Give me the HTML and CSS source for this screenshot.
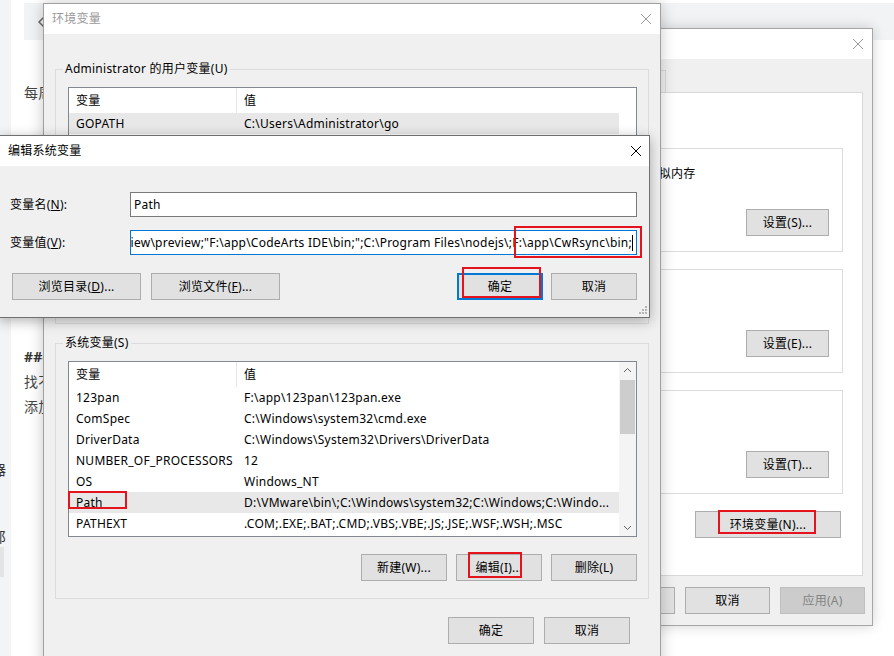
FILE: index.html
```html
<!DOCTYPE html>
<html lang="zh-CN">
<head>
  <meta charset="UTF-8" />
  <title>环境变量</title>
  <link rel="stylesheet" href="styles.css">
</head>
<body>
  <div class="page">
    <div class="side">
      <span class="side-ch c1">器</span>
      <span class="side-ch c2">郎</span>
      <span class="side-blk"></span>
    </div>
    <div class="page-main">
      <div class="topbar">
        <svg class="back" width="8" height="12" viewBox="0 0 8 12"><path d="M6 1L1 6l5 5" fill="none" stroke="#666" stroke-width="1.5"/></svg>
      </div>
      <div class="doc">
        <p class="lead">每周</p>
        <p class="h">### 配置</p>
        <p>找不到</p>
        <p>添加</p>
      </div>
    </div>
  </div>

  <!-- 系统属性 -->
  <div class="win win-sys">
    <div class="title inactive">
      <span>系统属性</span>
      <svg class="x" viewBox="0 0 10 10"><path d="M0 0L10 10M10 0L0 10" stroke="currentColor"/></svg>
    </div>
    <div class="win-body sys-body">
      <div class="tabs">
        <span class="tab">计算机名</span>
        <span class="tab">硬件</span>
        <span class="tab">高级</span>
        <span class="tab">保护</span>
        <span class="tab">远程</span>
      </div>
      <div class="panel">
        <fieldset class="group sgroup">
          <legend>性能</legend>
          <p>视觉效果，处理器计划，内存使用，以及虚拟内存</p>
          <div class="brow"><button class="btn btn-set">设置(S)...</button></div>
        </fieldset>
        <fieldset class="group sgroup">
          <legend>用户配置文件</legend>
          <p>与登录帐户相关的桌面设置</p>
          <div class="brow"><button class="btn btn-set">设置(E)...</button></div>
        </fieldset>
        <fieldset class="group sgroup">
          <legend>启动和故障恢复</legend>
          <p>系统启动、系统故障和调试信息</p>
          <div class="brow"><button class="btn btn-set">设置(T)...</button></div>
        </fieldset>
        <div class="brow env-row"><button class="btn btn-env">环境变量(N)...</button></div>
      </div>
      <div class="foot sys-foot">
        <button class="btn">确定</button>
        <button class="btn">取消</button>
        <button class="btn" disabled>应用(A)</button>
      </div>
    </div>
  </div>

  <!-- 环境变量 -->
  <div class="win win-env">
    <div class="title inactive">
      <span>环境变量</span>
      <svg class="x" viewBox="0 0 10 10"><path d="M0 0L10 10M10 0L0 10" stroke="currentColor"/></svg>
    </div>
    <div class="win-body env-body">
      <fieldset class="group g-user">
        <legend>Administrator 的用户变量(U)</legend>
        <div class="list">
          <div class="list-main">
            <div class="lrow lhead"><span>变量</span><span>值</span></div>
            <div class="lrow sel"><span>GOPATH</span><span>C:\Users\Administrator\go</span></div>
            <div class="lrow"><span>OneDrive</span><span>C:\Users\Administrator\OneDrive</span></div>
            <div class="lrow"><span>Path</span><span>C:\Users\Administrator\AppData\Local\Microsoft\WindowsApps;</span></div>
            <div class="lrow"><span>TEMP</span><span>C:\Users\Administrator\AppData\Local\Temp</span></div>
            <div class="lrow"><span>TMP</span><span>C:\Users\Administrator\AppData\Local\Temp</span></div>
          </div>
          <div class="vscroll plain"></div>
        </div>
      </fieldset>

      <fieldset class="group g-sys">
        <legend>系统变量(S)</legend>
        <div class="list">
          <div class="list-main">
            <div class="lrow lhead"><span>变量</span><span>值</span></div>
            <div class="lrow"><span>123pan</span><span>F:\app\123pan\123pan.exe</span></div>
            <div class="lrow"><span>ComSpec</span><span>C:\Windows\system32\cmd.exe</span></div>
            <div class="lrow"><span>DriverData</span><span>C:\Windows\System32\Drivers\DriverData</span></div>
            <div class="lrow"><span>NUMBER_OF_PROCESSORS</span><span>12</span></div>
            <div class="lrow"><span>OS</span><span>Windows_NT</span></div>
            <div class="lrow sel"><span>Path</span><span>D:\VMware\bin\;C:\Windows\system32;C:\Windows;C:\Windo...</span></div>
            <div class="lrow"><span>PATHEXT</span><span>.COM;.EXE;.BAT;.CMD;.VBS;.VBE;.JS;.JSE;.WSF;.WSH;.MSC</span></div>
          </div>
          <div class="vscroll">
            <svg class="arrow" width="17" height="17" viewBox="0 0 17 17"><path d="M5 10l3.5-3.5L12 10" fill="none" stroke="#606060"/></svg>
            <div class="thumb"></div>
            <div class="track"></div>
            <svg class="arrow" width="17" height="17" viewBox="0 0 17 17"><path d="M5 7l3.5 3.5L12 7" fill="none" stroke="#606060"/></svg>
          </div>
        </div>
        <div class="brow list-btns">
          <button class="btn">新建(W)...</button>
          <button class="btn">编辑(I)...</button>
          <button class="btn">删除(L)</button>
        </div>
      </fieldset>

      <div class="foot env-foot">
        <button class="btn">确定</button>
        <button class="btn">取消</button>
      </div>
    </div>
  </div>

  <!-- 编辑系统变量 -->
  <div class="win win-edit">
    <div class="title">
      <span>编辑系统变量</span>
      <svg class="x" viewBox="0 0 10 10"><path d="M0 0L10 10M10 0L0 10" stroke="currentColor"/></svg>
    </div>
    <div class="win-body edit-body">
      <div class="field">
        <label>变量名(<u>N</u>):</label>
        <div class="input">Path</div>
      </div>
      <div class="field">
        <label>变量值(<u>V</u>):</label>
        <div class="input focus"><span>D:\Program Files\Preview\preview;"F:\app\CodeArts IDE\bin;";C:\Program Files\nodejs\;F:\app\CwRsync\bin;</span><i class="caret"></i></div>
      </div>
      <div class="edit-btns">
        <button class="btn btn-browse">浏览目录(<u>D</u>)...</button>
        <button class="btn btn-browse">浏览文件(<u>F</u>)...</button>
        <span class="spacer"></span>
        <button class="btn btn-default">确定</button>
        <button class="btn">取消</button>
      </div>
      <svg class="grip" width="8" height="8" viewBox="0 0 8 8" fill="#b4b4b4">
        <rect x="6" y="0" width="2" height="2"/><rect x="3" y="3" width="2" height="2"/><rect x="6" y="3" width="2" height="2"/>
        <rect x="0" y="6" width="2" height="2"/><rect x="3" y="6" width="2" height="2"/><rect x="6" y="6" width="2" height="2"/>
      </svg>
    </div>
  </div>

  <!-- red annotation boxes -->
  <div class="mark mark-value"></div>
  <div class="mark mark-ok"></div>
  <div class="mark mark-path"></div>
  <div class="mark mark-edit"></div>
  <div class="mark mark-env"></div>
</body>
</html>
```

FILE: styles.css
```css
* {
  box-sizing: border-box;
}

body {
  margin: 0;
  width: 894px;
  height: 656px;
  overflow: hidden;
  position: relative;
  background: #fff;
  font-family: "Microsoft YaHei UI", "Noto Sans", "Noto Sans CJK SC", sans-serif;
  font-size: 12px;
  line-height: 16px;
  letter-spacing: 0.25px;
  color: #000;
}

/* background page */
.page {
  display: flex;
  height: 656px;
}

.side {
  width: 11px;
  flex: none;
  background: #f3f4f6;
  overflow: hidden;
  display: flex;
  flex-direction: column;
  padding-top: 462px;
}

.side-ch {
  margin-left: -8px;
  font-size: 14px;
  line-height: 16px;
  color: #333;
}

.side-ch.c2 {
  margin-top: 51px;
}

.side-blk {
  margin-top: 2px;
  width: 4px;
  height: 30px;
  background: #e4e4e4;
}

.page-main {
  flex: 1;
  margin-left: 13px;
  padding-top: 3px;
}

.topbar {
  height: 37px;
  background: #f2f3f5;
  display: flex;
  align-items: center;
  padding-left: 14px;
}

.doc {
  font-size: 14px;
  line-height: 25px;
  color: #444;
}

.doc p {
  margin: 0;
}

.doc .lead {
  margin-top: 40px;
}

.doc .h {
  margin-top: 239px;
  font-weight: bold;
  color: #333;
}

/* windows */
.win {
  position: absolute;
  background: #f0f0f0;
  display: flex;
  flex-direction: column;
}

.win-sys {
  left: 404px;
  top: 28px;
  width: 469px;
  height: 598px;
  border: 1px solid #a6a6a6;
  box-shadow: 0 0 12px rgba(0, 0, 0, 0.18);
}

.win-env {
  left: 43px;
  top: 3px;
  width: 618px;
  height: 690px;
  border: 1px solid #a0a0a0;
  box-shadow: 0 0 14px rgba(0, 0, 0, 0.22);
}

.win-edit {
  left: -1px;
  top: 135px;
  width: 651px;
  height: 183px;
  border: 1px solid #6f6f6f;
  box-shadow: 0 3px 12px rgba(0, 0, 0, 0.3);
}

.title {
  height: 30px;
  flex: none;
  background: #fff;
  display: flex;
  align-items: center;
  justify-content: space-between;
  padding: 0 9px 0 8px;
}

.title.inactive {
  color: #999;
}

.win-edit .title {
  padding-right: 8px;
}

.x {
  width: 10px;
  height: 10px;
}

.win-body {
  flex: 1;
}

/* buttons */
.btn {
  height: 27px;
  width: 86px;
  padding: 0;
  background: #e1e1e1;
  border: 1px solid #adadad;
  font: inherit;
  letter-spacing: inherit;
  color: #000;
}

.btn:disabled {
  background: #cccccc;
  border-color: #bfbfbf;
  color: #838383;
}

.brow {
  display: flex;
  justify-content: flex-end;
}

/* group boxes */
.group {
  margin: 0;
  border: 1px solid #dcdcdc;
  min-width: 0;
}

.group legend {
  padding: 0 2px;
  line-height: 16px;
}

/* env dialog */
.env-body {
  padding: 27px 11px 0 11px;
}

.env-body .group {
  padding: 0 11px 0 12px;
}

.env-body .group legend {
  margin-left: -5px;
}

.g-user {
  height: 263px;
}

.g-sys {
  margin-top: 11px;
  height: 264px;
}

.list {
  display: flex;
  margin-top: 10px;
  border: 1px solid #828790;
  background: #fff;
  overflow: hidden;
}

.g-user .list {
  height: 190px;
}

.g-sys .list {
  height: 176px;
}

.list-main {
  flex: 1;
  min-width: 0;
}

.lrow {
  display: grid;
  grid-template-columns: 168px 1fr;
  height: 21px;
  align-items: center;
  white-space: nowrap;
}

.lrow span {
  padding-left: 7px;
  overflow: hidden;
}

.lhead {
  height: 25px;
}

.lhead span:first-child {
  align-self: stretch;
  display: flex;
  align-items: center;
  border-right: 1px solid #e5e5e5;
}

.lrow.sel {
  background: #e8e8e8;
}

.vscroll {
  width: 17px;
  flex: none;
  display: flex;
  flex-direction: column;
  background: #f4f4f4;
}

.vscroll.plain {
  background: #fff;
}

.arrow {
  flex: none;
}

.thumb {
  height: 54px;
  margin: 1px 1px 0;
  background: #cdcdcd;
}

.track {
  flex: 1;
}

.list-btns {
  margin-top: 17px;
  gap: 9px;
}

.env-foot {
  display: flex;
  justify-content: flex-end;
  gap: 10px;
  margin-top: 18px;
  padding-right: 19px;
}

/* edit dialog */
.edit-body {
  display: flex;
  flex-direction: column;
  padding: 26px 12px 0 10px;
}

.field {
  display: flex;
  align-items: center;
  height: 25px;
}

.field + .field {
  margin-top: 13px;
}

.field label {
  width: 120px;
  flex: none;
}

.input {
  flex: 1;
  min-width: 0;
  height: 25px;
  border: 1px solid #7a7a7a;
  background: #fff;
  padding: 0 3px;
  display: flex;
  align-items: center;
  overflow: hidden;
  white-space: nowrap;
}

.input.focus {
  border-color: #0078d7;
  justify-content: flex-end;
}

.input.focus span {
  flex: none;
}

.caret {
  flex: none;
  width: 1px;
  height: 16px;
  background: #000;
}

.edit-btns {
  display: flex;
  margin-top: 18px;
}

.btn-browse {
  width: 129px;
  margin-left: 2px;
}

.btn-browse + .btn-browse {
  margin-left: 10px;
}

.spacer {
  flex: 1;
}

.btn-default {
  border: 2px solid #0078d7;
  margin-right: 8px;
}

.grip {
  align-self: flex-end;
  margin: 6px -10px 0 0;
}

/* system properties */
.sys-body {
  padding-top: 11px;
}

.tabs {
  display: flex;
  height: 22px;
  margin-left: 9px;
}

.tab {
  width: 48px;
  margin-right: -1px;
  border: 1px solid #d9d9d9;
  border-bottom: none;
  text-align: center;
  line-height: 20px;
  white-space: nowrap;
}

.tab:first-child {
  width: 64px;
}

.panel {
  height: 484px;
  margin: 0 9px;
  background: #fff;
  border: 1px solid #d9d9d9;
  padding: 47px 19px 0 9px;
}

.sgroup {
  height: 112px;
  padding: 0 13px 0 1px;
}

.sgroup + .sgroup {
  margin-top: 9px;
}

.sgroup p {
  margin: 10px 0 0;
  white-space: nowrap;
}

.sgroup .brow {
  margin-top: 27px;
}

.btn-set {
  width: 83px;
}

.env-row {
  margin-top: 17px;
  padding-right: 2px;
}

.btn-env {
  width: 146px;
}

.sys-foot {
  display: flex;
  justify-content: flex-end;
  gap: 10px;
  padding: 11px 7px 0 0;
}

.sys-foot .btn {
  width: 85px;
}

/* annotations */
.mark {
  position: absolute;
  border: 2px solid #e5131d;
}

.mark-value { left: 514px; top: 226px; width: 128px; height: 32px; }
.mark-ok    { left: 462px; top: 267px; width: 79px;  height: 31px; }
.mark-path  { left: 68px;  top: 491px; width: 59px;  height: 18px; }
.mark-edit  { left: 468px; top: 552px; width: 54px;  height: 26px; }
.mark-env   { left: 718px; top: 510px; width: 98px;  height: 24px; }
```
